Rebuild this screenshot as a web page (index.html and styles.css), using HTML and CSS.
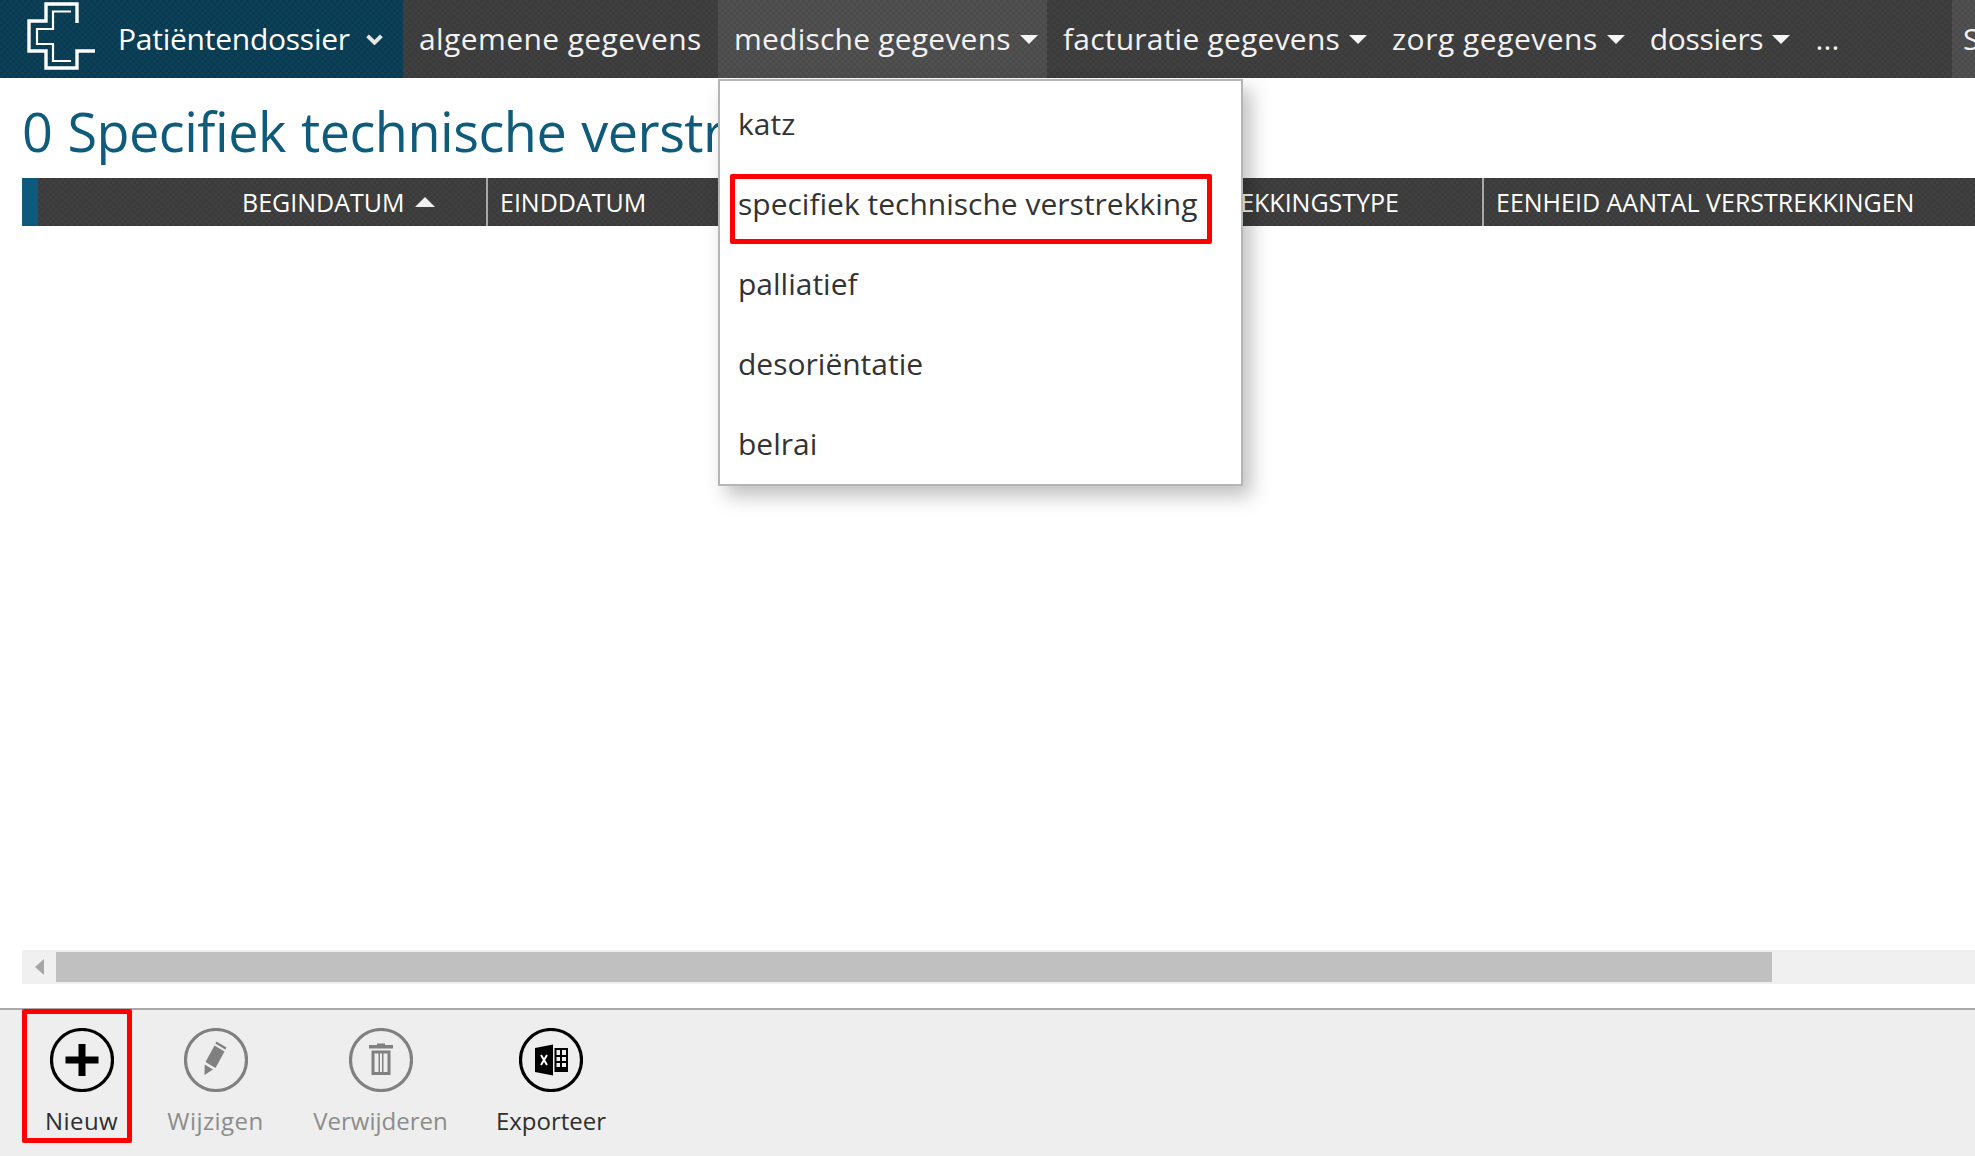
FILE: index.html
```html
<!DOCTYPE html>
<html lang="nl">
<head>
<meta charset="utf-8">
<title>Patiëntendossier</title>
<link rel="stylesheet" href="styles.css">
</head>
<body>
<div class="app">
  <nav class="nav">
    <div class="brand">
      <svg class="logo" viewBox="0 0 100 78" aria-hidden="true">
        <path class="logo-outer" d="M77 23V4H46V21H29V51H46V68H77V51H95"/>
        <path class="logo-inner" d="M71 11.5H53V29H37V44H53V61H71"/>
      </svg>
      <span class="brand-name">Patiëntendossier</span>
      <svg class="chev" viewBox="0 0 16 10" aria-hidden="true"><path d="M1.5 1.5L8 8L14.5 1.5"/></svg>
    </div>
    <a class="nav-item plain">algemene gegevens</a>
    <a class="nav-item active">medische gegevens<i class="caret"></i></a>
    <a class="nav-item">facturatie gegevens<i class="caret"></i></a>
    <a class="nav-item care">zorg gegevens<i class="caret"></i></a>
    <a class="nav-item files">dossiers<i class="caret"></i></a>
    <a class="nav-item more">...</a>
    <a class="nav-end">S</a>
  </nav>

  <main class="main">
    <h1 class="title">0 Specifiek technische verstrekkingen</h1>
    <div class="thead">
      <div class="stripe"></div>
      <div class="th th-start">BEGINDATUM<i class="sort"></i></div>
      <div class="th th-end">EINDDATUM</div>
      <div class="th th-type">VERSTREKKINGSTYPE</div>
      <div class="th th-unit">EENHEID AANTAL VERSTREKKINGEN</div>
    </div>
    <div class="tbody"></div>
    <div class="scrollbar">
      <div class="scroll-btn"><i class="scroll-arrow"></i></div>
      <div class="scroll-thumb"></div>
    </div>
  </main>

  <footer class="toolbar">
    <button class="tool roomy">
      <svg class="tool-icon" viewBox="0 0 64 64" aria-hidden="true">
        <circle class="ring" cx="32" cy="32" r="30.5"/>
        <path class="solid" d="M28.5 16H35.5V28.5H48.5V35.5H35.5V48H28.5V35.5H15.5V28.5H28.5Z"/>
      </svg>
      <span>Nieuw</span>
    </button>
    <button class="tool off roomy">
      <svg class="tool-icon" viewBox="0 0 64 64" aria-hidden="true">
        <circle class="ring" cx="32" cy="32" r="30.5"/>
        <path class="solid" d="M32.5 13.5L42.5 19.5L41.3 21.6L31.3 15.6Z"/>
        <path class="solid" d="M30.5 17.5L40.5 23.5L31.5 40L21.5 34Z"/>
        <path class="solid" d="M20.7 36.5L29 41.5L20.5 47Z"/>
      </svg>
      <span>Wijzigen</span>
    </button>
    <button class="tool off">
      <svg class="tool-icon" viewBox="0 0 64 64" aria-hidden="true">
        <circle class="ring" cx="32" cy="32" r="30.5"/>
        <path class="solid" d="M28 15.5H36V17H44V20.5H20V17H28Z"/>
        <path class="solid" fill-rule="evenodd" d="M22.5 22.5H41.5V47H22.5ZM25.5 25.5V44H29.5V25.5ZM31 25.5V44H33V25.5ZM34.5 25.5V44H38.5V25.5Z"/>
      </svg>
      <span>Verwijderen</span>
    </button>
    <button class="tool">
      <svg class="tool-icon" viewBox="0 0 64 64" aria-hidden="true">
        <circle class="ring" cx="32" cy="32" r="30.5"/>
        <path class="solid" d="M34 16.5V47.5L16 44V20Z"/>
        <path class="solid" fill-rule="evenodd" d="M35.5 20H49V44H35.5ZM37.5 22V27H41V22ZM43 22V27H47V22ZM37.5 29V33H41V29ZM43 29V33H47V29ZM37.5 35V39H41V35ZM43 35V39H47V35Z"/>
        <path class="xmark" d="M22 27L28 37M28 27L22 37"/>
      </svg>
      <span>Exporteer</span>
    </button>
  </footer>

  <ul class="menu">
    <li>katz</li>
    <li>specifiek technische verstrekking</li>
    <li>palliatief</li>
    <li>desoriëntatie</li>
    <li>belrai</li>
  </ul>
  <div class="mark mark-item"></div>
  <div class="mark mark-new"></div>
</div>
</body>
</html>
```

FILE: styles.css
```css
* { box-sizing: border-box; }
html, body { margin: 0; height: 100%; background: #fff; }
body { font-family: "Open Sans", "Noto Sans", sans-serif; color: #333; overflow: hidden; }
.app { position: relative; width: 1975px; height: 1156px; display: flex; flex-direction: column; overflow: hidden; }

.nav {
  height: 78px; flex: none; display: flex; align-items: stretch; color: #f2f2f2;
  font-size: 30px; letter-spacing: 0.22px; line-height: 78px; white-space: nowrap;
  background: repeating-conic-gradient(#404040 0 25%, #3b3b3b 0 50%) 0 0 / 6px 6px;
}
.brand {
  width: 403px; flex: none; display: flex; align-items: center; color: #fff;
  letter-spacing: -0.25px;
  background: repeating-conic-gradient(#0b4259 0 25%, #093a50 0 50%) 0 0 / 6px 6px;
}
.logo { width: 100px; height: 78px; flex: none; margin-right: 18px; }
.logo path { fill: none; stroke: #fff; }
.logo-outer { stroke-width: 3.4; }
.logo-inner { stroke-width: 2.2; }
.chev { width: 17px; height: 11px; margin-left: 16px; flex: none; }
.chev path { fill: none; stroke: #e8e8e8; stroke-width: 3.6; }
.nav-item { display: flex; align-items: center; padding: 0 10px 0 16px; }
.nav-item.plain { width: 315px; letter-spacing: 0.4px; }
.nav-item.active {
  width: 329px;
  background: repeating-conic-gradient(#515151 0 25%, #4a4a4a 0 50%) 0 0 / 6px 6px;
}
.nav-item.care { letter-spacing: 0.5px; padding-left: 15px; }
.nav-item.files { letter-spacing: -0.3px; padding-left: 15px; }
.caret { width: 0; height: 0; margin-left: 9px; border-left: 9px solid transparent; border-right: 9px solid transparent; border-top: 9px solid #f5f5f5; }
.more { padding-left: 15px; }
.nav-end {
  margin-left: auto; width: 23px; padding-left: 11px; overflow: hidden;
  background: repeating-conic-gradient(#515151 0 25%, #4a4a4a 0 50%) 0 0 / 6px 6px;
}

.main { flex: 1; display: flex; flex-direction: column; min-height: 0; padding-left: 22px; }
.title {
  margin: 0; height: 100px; flex: none; font-weight: 400; font-size: 54px; letter-spacing: -0.5px; word-spacing: 1.5px; line-height: 106px;
  color: #0e5b7c; white-space: nowrap;
}
.thead {
  height: 48px; flex: none; display: grid; grid-template-columns: 16px 448px 606px 390px 1fr;
  color: #fff; font-size: 25px; line-height: 48px; white-space: nowrap;
  background: repeating-conic-gradient(#404040 0 25%, #3b3b3b 0 50%) 0 0 / 6px 6px;
}
.stripe { background: #0d5a7d; }
.th { padding-left: 13px; display: flex; align-items: center; }
.th-start { padding-left: 204px; }
.th-end { border-left: 2px solid #a8a8a8; padding-left: 12px; }
.th-type { padding-left: 61px; }
.th-unit { border-left: 2px solid #a8a8a8; padding-left: 12px; }
.sort { width: 0; height: 0; margin-left: 11px; border-left: 10px solid transparent; border-right: 10px solid transparent; border-bottom: 10px solid #f0f0f0; }
.tbody { flex: 1; }
.scrollbar { height: 34px; flex: none; margin-bottom: 24px; display: flex; align-items: center; background: #f0f0f0; }
.scroll-btn { width: 34px; display: flex; justify-content: center; }
.scroll-arrow { width: 0; height: 0; border-top: 8px solid transparent; border-bottom: 8px solid transparent; border-right: 9px solid #a6a6a6; }
.scroll-thumb { width: 1716px; height: 30px; background: #c0c0c0; }

.toolbar {
  height: 148px; flex: none; padding: 18px 0 0 46px; display: grid;
  grid-template-columns: 71px 99px 133px 110px; column-gap: 49px; align-content: start;
  background: #eee; border-top: 2px solid #a9a9a9;
}
.tool {
  padding: 0; border: 0; background: none; display: flex; flex-direction: column; align-items: center; justify-content: flex-start;
  font: inherit; font-size: 24px; color: #2f2f2f; white-space: nowrap; line-height: 34px; width: 100%;
}
.tool.roomy { letter-spacing: 0.45px; }
.tool-icon { width: 64px; height: 64px; margin-bottom: 12px; flex: none; display: block; }
.ring { fill: none; stroke: #000; stroke-width: 3.2; }
.solid { fill: #000; }
.xmark { fill: none; stroke: #fff; stroke-width: 2; }
.tool.off { color: #8c8c8c; }
.off .ring { stroke: #808080; }
.off .solid { fill: #808080; }

.menu {
  position: absolute; left: 718px; top: 79px; width: 525px; height: 407px; margin: 0; padding: 3px 0 0; list-style: none;
  background: #fff; border: 2px solid #b5b5b5; box-shadow: 8px 10px 18px rgba(0,0,0,.25);
  font-size: 30px; color: #333; white-space: nowrap;
}
.menu li { height: 80px; line-height: 80px; padding-left: 18px; }
.mark { position: absolute; border: 5px solid #f00; border-radius: 2px; }
.mark-item { left: 730px; top: 174px; width: 482px; height: 70px; }
.mark-new { left: 22px; top: 1009px; width: 110px; height: 134px; }
```
